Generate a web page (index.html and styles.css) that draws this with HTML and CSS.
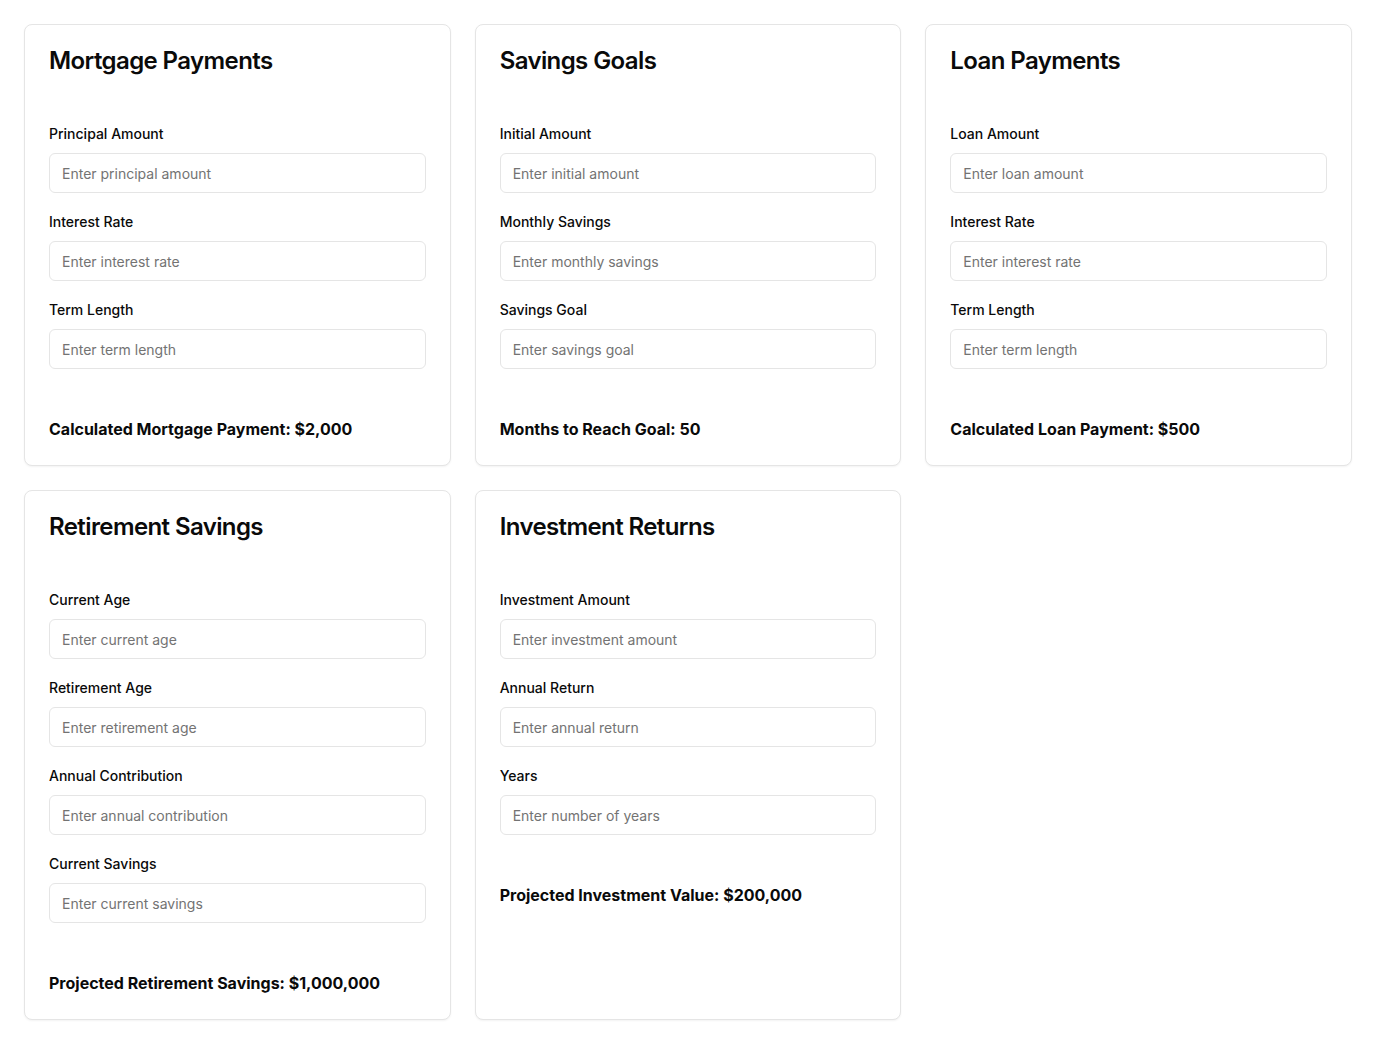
FILE: index.html
```html
<!DOCTYPE html>
<html lang="en">
<head>
<meta charset="utf-8">
<title>Financial Calculators</title>
<link rel="stylesheet" href="styles.css">
</head>
<body>
<main class="grid">
  <section class="card">
    <h2 class="card-title">Mortgage Payments</h2>
    <form class="fields">
      <div class="field"><label class="label">Principal Amount</label><input class="input" placeholder="Enter principal amount"></div>
      <div class="field"><label class="label">Interest Rate</label><input class="input" placeholder="Enter interest rate"></div>
      <div class="field"><label class="label">Term Length</label><input class="input" placeholder="Enter term length"></div>
    </form>
    <p class="result">Calculated Mortgage Payment: $2,000</p>
  </section>
  <section class="card">
    <h2 class="card-title">Savings Goals</h2>
    <form class="fields">
      <div class="field"><label class="label">Initial Amount</label><input class="input" placeholder="Enter initial amount"></div>
      <div class="field"><label class="label">Monthly Savings</label><input class="input" placeholder="Enter monthly savings"></div>
      <div class="field"><label class="label">Savings Goal</label><input class="input" placeholder="Enter savings goal"></div>
    </form>
    <p class="result">Months to Reach Goal: 50</p>
  </section>
  <section class="card">
    <h2 class="card-title">Loan Payments</h2>
    <form class="fields">
      <div class="field"><label class="label">Loan Amount</label><input class="input" placeholder="Enter loan amount"></div>
      <div class="field"><label class="label">Interest Rate</label><input class="input" placeholder="Enter interest rate"></div>
      <div class="field"><label class="label">Term Length</label><input class="input" placeholder="Enter term length"></div>
    </form>
    <p class="result">Calculated Loan Payment: $500</p>
  </section>
  <section class="card">
    <h2 class="card-title">Retirement Savings</h2>
    <form class="fields">
      <div class="field"><label class="label">Current Age</label><input class="input" placeholder="Enter current age"></div>
      <div class="field"><label class="label">Retirement Age</label><input class="input" placeholder="Enter retirement age"></div>
      <div class="field"><label class="label">Annual Contribution</label><input class="input" placeholder="Enter annual contribution"></div>
      <div class="field"><label class="label">Current Savings</label><input class="input" placeholder="Enter current savings"></div>
    </form>
    <p class="result">Projected Retirement Savings: $1,000,000</p>
  </section>
  <section class="card">
    <h2 class="card-title">Investment Returns</h2>
    <form class="fields">
      <div class="field"><label class="label">Investment Amount</label><input class="input" placeholder="Enter investment amount"></div>
      <div class="field"><label class="label">Annual Return</label><input class="input" placeholder="Enter annual return"></div>
      <div class="field"><label class="label">Years</label><input class="input" placeholder="Enter number of years"></div>
    </form>
    <p class="result">Projected Investment Value: $200,000</p>
  </section>
</main>
</body>
</html>
```

FILE: styles.css
```css
* { box-sizing: border-box; }
html, body { margin: 0; padding: 0; }
body {
  font-family: Inter, "Liberation Sans", sans-serif;
  font-size: 16px;
  line-height: 24px;
  color: #0a0a0a;
  background: #ffffff;
}
.grid {
  display: grid;
  grid-template-columns: repeat(3, 1fr);
  gap: 24px;
  padding: 24px;
}
.card {
  border: 1px solid #e5e5e5;
  border-radius: 8px;
  background: #fff;
  box-shadow: 0 1px 2px rgba(0, 0, 0, 0.05);
  padding: 24px;
}
.card-title {
  margin: 0 0 48px;
  font-size: 24px;
  line-height: 24px;
  font-weight: 600;
  letter-spacing: -0.6px;
  color: #0a0a0a;
}
.fields {
  display: flex;
  flex-direction: column;
  gap: 16px;
  margin: 0;
}
.field { display: block; }
.label {
  font-size: 14px;
  font-weight: 500;
  line-height: 1;
  color: #0a0a0a;
}
.input {
  display: block;
  width: 100%;
  height: 40px;
  margin-top: 8px;
  padding: 8px 12px;
  border: 1px solid #e5e5e5;
  border-radius: 6px;
  background: #fff;
  font-family: inherit;
  font-size: 14px;
  color: #0a0a0a;
  outline: none;
}
.input::placeholder { color: #737373; }
.result {
  margin: 48px 0 0;
  font-size: 16px;
  line-height: 24px;
  font-weight: 700;
}
```
